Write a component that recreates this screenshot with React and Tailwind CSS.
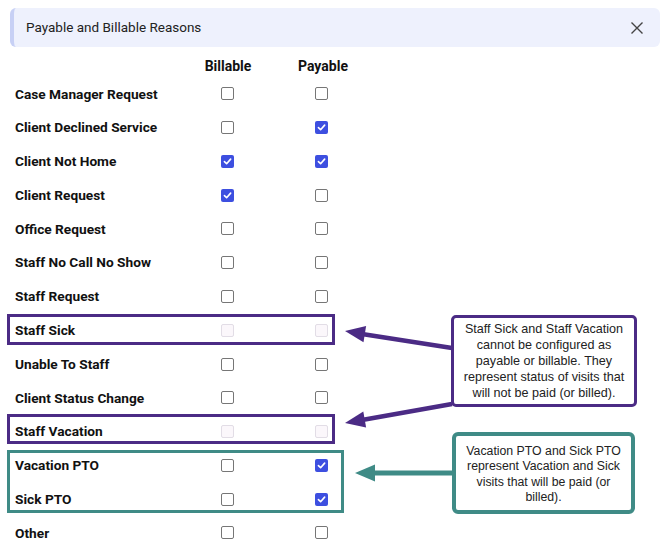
import React from 'react';

const rows = [
  { name: 'Case Manager Request', billable: false, payable: false },
  { name: 'Client Declined Service', billable: false, payable: true },
  { name: 'Client Not Home', billable: true, payable: true },
  { name: 'Client Request', billable: true, payable: false },
  { name: 'Office Request', billable: false, payable: false },
  { name: 'Staff No Call No Show', billable: false, payable: false },
  { name: 'Staff Request', billable: false, payable: false },
  { name: 'Staff Sick', billable: false, payable: false, disabled: true },
  { name: 'Unable To Staff', billable: false, payable: false },
  { name: 'Client Status Change', billable: false, payable: false },
  { name: 'Staff Vacation', billable: false, payable: false, disabled: true },
  { name: 'Vacation PTO', billable: false, payable: true },
  { name: 'Sick PTO', billable: false, payable: true },
  { name: 'Other', billable: false, payable: false },
];

const Box = ({ checked, disabled }) => {
  if (checked) {
    return (
      <span className="flex w-[13px] h-[13px] rounded-[2px] bg-[#3d4fe0] items-center justify-center">
        <svg width="9" height="9" viewBox="0 0 10 10">
          <path d="M1.6 5.2 L4 7.5 L8.5 2.4" fill="none" stroke="#fff" strokeWidth="1.8" strokeLinecap="round" strokeLinejoin="round" />
        </svg>
      </span>
    );
  }
  return (
    <span
      className={
        disabled
          ? 'block w-[13px] h-[13px] rounded-[2px] border border-[#e2dde6] bg-[#fbf7fb]'
          : 'block w-[13px] h-[13px] rounded-[2px] border border-[#767676] bg-white'
      }
    />
  );
};

const App = () => {
  return (
    <div className="relative w-[670px] h-[550px] bg-white overflow-hidden font-['Roboto',sans-serif] text-[#111]">
      {/* Header */}
      <div className="mx-[10px] mt-[8px] h-[39px] flex items-center rounded-[6px] bg-[#eef1fd] border-l-[4px] border-[#c7d0f5] pl-[12px] pr-[16px]">
        <div className="flex-1 text-[13.5px] text-[#222]">Payable and Billable Reasons</div>
        <svg width="14" height="14" viewBox="0 0 14 14">
          <path d="M1.5 1.5 L12.5 12.5 M12.5 1.5 L1.5 12.5" stroke="#444" strokeWidth="1.4" />
        </svg>
      </div>

      {/* Column headers */}
      <div className="grid grid-cols-[165px_94px_94px] pl-[15px] mt-[9px] h-[18px] items-center text-[14px] font-bold">
        <div />
        <div className="text-center pl-[2px]">Billable</div>
        <div className="text-center pl-[4px]">Payable</div>
      </div>

      {/* Rows */}
      <div className="mt-[3px] pl-[15px]">
        {rows.map((r) => (
          <div key={r.name} className="grid grid-cols-[165px_94px_94px] h-[33.77px] items-center">
            <div className="text-[13.7px] font-bold whitespace-nowrap">{r.name}</div>
            <div className="flex justify-center">
              <Box checked={r.billable} disabled={r.disabled} />
            </div>
            <div className="flex justify-center">
              <Box checked={r.payable} disabled={r.disabled} />
            </div>
          </div>
        ))}
      </div>

      {/* Annotation outlines */}
      <div className="absolute left-[7px] top-[314px] w-[328px] h-[31px] border-[3px] border-[#4b2b85]" />
      <div className="absolute left-[7px] top-[414px] w-[328px] h-[30px] border-[3px] border-[#4b2b85]" />
      <div className="absolute left-[7px] top-[450px] w-[337px] h-[63px] border-[3px] border-[#3f8b86]" />

      {/* Arrows */}
      <svg className="absolute left-0 top-0" width="670" height="550">
        <line x1="452" y1="348" x2="362" y2="334" stroke="#4b2b85" strokeWidth="4.5" />
        <polygon points="345,331 366.1,326 363.5,342.2" fill="#4b2b85" />
        <line x1="452" y1="404" x2="362" y2="420" stroke="#4b2b85" strokeWidth="4.5" />
        <polygon points="345,423 366.1,427.6 363.3,411.4" fill="#4b2b85" />
        <line x1="453" y1="473" x2="372" y2="473" stroke="#3f8b86" strokeWidth="5" />
        <polygon points="355,473 375,464.5 375,481.5" fill="#3f8b86" />
      </svg>

      {/* Callouts */}
      <div className="absolute left-[451px] top-[315px] w-[186px] h-[92px] rounded-[5px] border-[3px] border-[#4b2b85] bg-white flex items-center justify-center">
        <p className="text-center text-[12.6px] leading-[16px] text-[#222] font-['Liberation_Sans',Arial,sans-serif]">
          Staff Sick and Staff Vacation<br />
          cannot be configured as<br />
          payable or billable. They<br />
          represent status of visits that<br />
          will not be paid (or billed).
        </p>
      </div>
      <div className="absolute left-[452px] top-[432px] w-[183px] h-[82px] rounded-[6px] border-[4px] border-[#3f8b86] bg-white flex items-start justify-center pt-[8px]">
        <p className="text-center text-[12.3px] leading-[15.4px] text-[#222] font-['Liberation_Sans',Arial,sans-serif]">
          Vacation PTO and Sick PTO<br />
          represent Vacation and Sick<br />
          visits that will be paid (or<br />
          billed).
        </p>
      </div>
    </div>
  );
};

export default App;
